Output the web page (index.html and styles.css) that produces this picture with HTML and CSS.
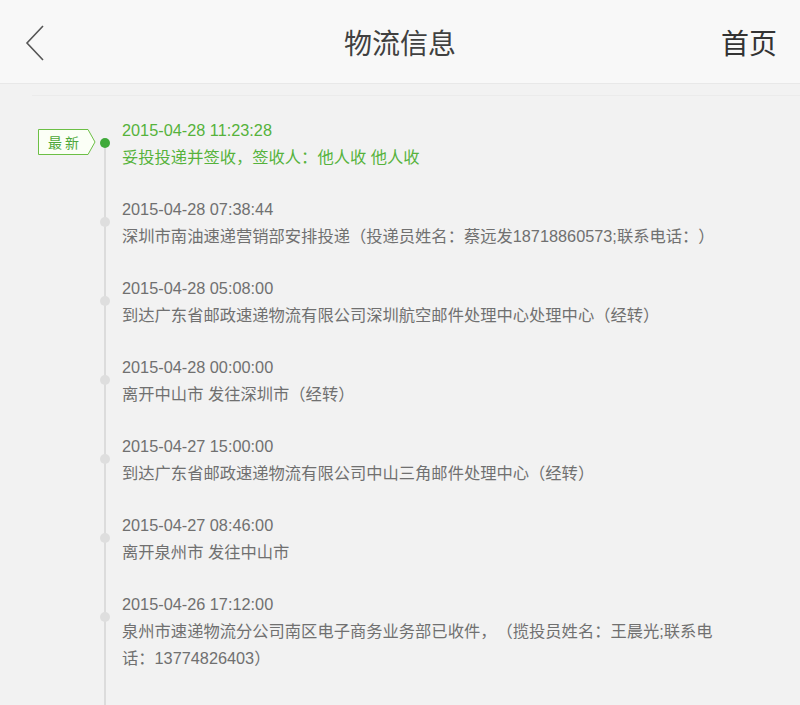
FILE: index.html
```html
<!DOCTYPE html>
<html lang="zh-CN">
<head>
<meta charset="utf-8">
<title>物流信息</title>
<link rel="stylesheet" href="styles.css">
</head>
<body>
<header class="topbar">
  <a class="back" aria-label="返回">
    <svg width="22" height="40" viewBox="0 0 22 40"><path d="M19 3 L3 20 L19 37" fill="none" stroke="#555" stroke-width="1.6"/></svg>
  </a>
  <h1 class="title">物流信息</h1>
  <a class="home">首页</a>
</header>
<div class="divider"></div>
<ul class="timeline">
  <li class="item latest">
    <span class="badge">
      <svg width="58" height="26" viewBox="0 0 58 26"><path d="M0.5 0.5 H50 L57 13 L50 25.5 H0.5 Z" fill="#fbfff6" stroke="#6cbf45" stroke-width="1"/></svg>
      <span class="badge-text">最新</span>
    </span>
    <div class="time">2015-04-28 11:23:28</div>
    <div class="desc">妥投投递并签收，签收人：他人收 他人收</div>
  </li>
  <li class="item">
    <div class="time">2015-04-28 07:38:44</div>
    <div class="desc">深圳市南油速递营销部安排投递（投递员姓名：蔡远发18718860573;联系电话：）</div>
  </li>
  <li class="item">
    <div class="time">2015-04-28 05:08:00</div>
    <div class="desc">到达广东省邮政速递物流有限公司深圳航空邮件处理中心处理中心（经转）</div>
  </li>
  <li class="item">
    <div class="time">2015-04-28 00:00:00</div>
    <div class="desc">离开中山市 发往深圳市（经转）</div>
  </li>
  <li class="item">
    <div class="time">2015-04-27 15:00:00</div>
    <div class="desc">到达广东省邮政速递物流有限公司中山三角邮件处理中心（经转）</div>
  </li>
  <li class="item">
    <div class="time">2015-04-27 08:46:00</div>
    <div class="desc">离开泉州市 发往中山市</div>
  </li>
  <li class="item">
    <div class="time">2015-04-26 17:12:00</div>
    <div class="desc">泉州市速递物流分公司南区电子商务业务部已收件，（揽投员姓名：王晨光;联系电话：13774826403）</div>
  </li>
</ul>
</body>
</html>
```

FILE: styles.css
```css
html, body {
  margin: 0;
  padding: 0;
}
body {
  background: #f2f2f2;
  font-family: "Liberation Sans", "Noto Sans CJK SC", sans-serif;
  height: 705px;
  overflow: hidden;
  text-spacing-trim: space-all;
}
.topbar {
  height: 83px;
  background: #f8f8f8;
  border-bottom: 1px solid #e8e8e8;
  display: flex;
  align-items: center;
  justify-content: space-between;
  padding: 0 23px 0 24px;
  position: relative;
}
.back {
  display: flex;
  width: 22px;
  height: 40px;
  margin-top: 2px;
}
.title {
  position: absolute;
  left: 0;
  right: 0;
  text-align: center;
  margin: 0;
  font-family: "Noto Sans CJK SC", sans-serif;
  font-weight: normal;
  font-size: 28px;
  color: #404040;
  pointer-events: none;
}
.home {
  font-family: "Noto Sans CJK SC", sans-serif;
  font-size: 28px;
  color: #333;
}
.divider {
  height: 1px;
  margin: 11px 0 0 32px;
  background: #ebebeb;
}
.timeline {
  list-style: none;
  margin: 0;
  padding: 20px 0 9px 0;
  position: relative;
}
.timeline::before {
  content: "";
  position: absolute;
  left: 104px;
  top: 47px;
  bottom: 0;
  width: 1.5px;
  background: #dcdcdc;
}
.item {
  position: relative;
  padding-left: 122px;
  width: 613px;
  margin-bottom: 24px;
  font-size: 16.3px;
  color: #707070;
}
.item::after {
  content: "";
  position: absolute;
  left: 100px;
  top: 22px;
  width: 10px;
  height: 10px;
  border-radius: 50%;
  background: #dedede;
}
.item.latest::after {
  background: #3fa93a;
}
.item.latest {
  color: #56b23c;
}
.time {
  line-height: 28px;
}
.desc {
  line-height: 27px;
}
.badge {
  position: absolute;
  left: 38px;
  top: 13px;
  width: 58px;
  height: 26px;
}
.badge svg {
  position: absolute;
  left: 0;
  top: 0;
}
.badge-text {
  position: absolute;
  left: 0;
  top: 0;
  width: 51px;
  line-height: 26px;
  text-align: center;
  font-family: "Noto Sans CJK SC", sans-serif;
  font-size: 14px;
  letter-spacing: 3px;
  text-indent: 3px;
  color: #4ea83a;
}
```
